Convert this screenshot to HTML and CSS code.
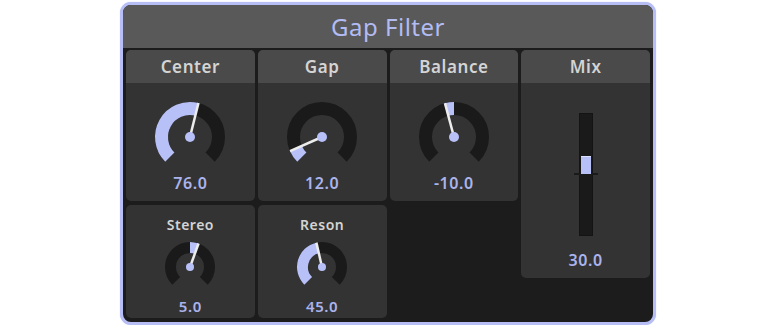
FILE: index.html
```html
<!DOCTYPE html>
<html lang="en">
<head>
    <meta charset="UTF-8">
    <meta name="viewport" content="width=device-width, initial-scale=1.0">
    <title>Gap Filter</title>
    <link rel="stylesheet" href="styles.css">
</head>
<body>

    <div class="plugin">
        <div class="title">Gap Filter</div>

        <div class="controls">
            <!-- Linha de cima -->
            <div class="card card-big">
                <div class="card-head">Center</div>
                <svg class="knob" width="76" height="72" viewBox="0 0 76 72">
                    <path class="track" d="M17.85 58.15 A28.5 28.5 0 1 1 58.15 58.15" stroke-width="13"/>
                    <path class="fill" d="M17.85 58.15 A28.5 28.5 0 0 1 44.89 10.35" stroke-width="13"/>
                    <line class="pointer" x1="38" y1="38" x2="46.47" y2="4.04"/>
                    <circle class="dot" cx="38" cy="38" r="5"/>
                </svg>
                <div class="value">76.0</div>
            </div>

            <div class="card card-big">
                <div class="card-head">Gap</div>
                <svg class="knob" width="76" height="72" viewBox="0 0 76 72">
                    <path class="track" d="M17.85 58.15 A28.5 28.5 0 1 1 58.15 58.15" stroke-width="13"/>
                    <path class="fill" d="M17.85 58.15 A28.5 28.5 0 0 1 11.97 49.59" stroke-width="13"/>
                    <line class="pointer" x1="38" y1="38" x2="6.03" y2="52.23"/>
                    <circle class="dot" cx="38" cy="38" r="5"/>
                </svg>
                <div class="value">12.0</div>
            </div>

            <div class="card card-big">
                <div class="card-head">Balance</div>
                <svg class="knob" width="76" height="72" viewBox="0 0 76 72">
                    <path class="track" d="M17.85 58.15 A28.5 28.5 0 1 1 58.15 58.15" stroke-width="13"/>
                    <path class="fill" d="M30.62 10.47 A28.5 28.5 0 0 1 38 9.5" stroke-width="13"/>
                    <line class="pointer" x1="38" y1="38" x2="28.94" y2="4.19"/>
                    <circle class="dot" cx="38" cy="38" r="5"/>
                </svg>
                <div class="value">-10.0</div>
            </div>

            <div class="card card-mix">
                <div class="card-head">Mix</div>
                <div class="fader">
                    <div class="fader-mark"></div>
                    <div class="fader-thumb"></div>
                </div>
                <div class="value">30.0</div>
            </div>

            <!-- Linha de baixo -->
            <div class="card card-small">
                <div class="label">Stereo</div>
                <svg class="knob" width="54" height="50" viewBox="0 0 54 50">
                    <path class="track" d="M13.21 40.79 A19.5 19.5 0 1 1 40.79 40.79" stroke-width="11"/>
                    <path class="fill" d="M27 7.5 A19.5 19.5 0 0 1 33.67 8.68" stroke-width="11"/>
                    <line class="pointer" x1="27" y1="27" x2="35.55" y2="3.51"/>
                    <circle class="dot" cx="27" cy="27" r="4"/>
                </svg>
                <div class="value">5.0</div>
            </div>

            <div class="card card-small">
                <div class="label">Reson</div>
                <svg class="knob" width="54" height="50" viewBox="0 0 54 50">
                    <path class="track" d="M13.21 40.79 A19.5 19.5 0 1 1 40.79 40.79" stroke-width="11"/>
                    <path class="fill" d="M13.21 40.79 A19.5 19.5 0 0 1 22.61 8.0" stroke-width="11"/>
                    <line class="pointer" x1="27" y1="27" x2="21.38" y2="2.64"/>
                    <circle class="dot" cx="27" cy="27" r="4"/>
                </svg>
                <div class="value">45.0</div>
            </div>
        </div>
    </div>

</body>
</html>
```

FILE: styles.css
```css
body {
    font-family: "Noto Sans", "Open Sans", sans-serif;
    margin: 0;
    padding: 2px 0 0;
    background-color: #ffffff;
}

.plugin {
    box-sizing: border-box;
    width: 536px;
    height: 323px;
    margin: 0 auto;
    border: 3px solid #b6bef5;
    border-radius: 11px;
    background-color: #1c1c1c;
    box-shadow: 0 0 1px #b6bef5;
    overflow: hidden;
}

.title {
    height: 43px;
    display: flex;
    align-items: center;
    justify-content: center;
    background-color: #595959;
    color: #b3bbf3;
    font-size: 24px;
    letter-spacing: 0.5px;
}

.controls {
    display: grid;
    grid-template-columns: repeat(4, 1fr);
    column-gap: 3px;
    row-gap: 4px;
    padding: 2px 3px 4px;
    align-items: start;
}

.card {
    display: flex;
    flex-direction: column;
    align-items: center;
    background-color: #333333;
    border-radius: 5px;
}

.card-head {
    align-self: stretch;
    height: 33px;
    display: flex;
    align-items: center;
    justify-content: center;
    background-color: #4a4a4a;
    border-radius: 5px 5px 0 0;
    color: #d4d4d4;
    font-size: 17px;
    font-weight: 600;
    letter-spacing: 0.6px;
}

.value {
    height: 20px;
    line-height: 20px;
    color: #abb3ec;
    font-size: 16px;
    font-weight: 600;
    letter-spacing: 0.6px;
}

/* Cartões grandes */
.card-big {
    padding-bottom: 8px;
}

.card-big .knob {
    margin-top: 16px;
}

.card-big .value {
    margin-top: 2px;
}

/* Cartões pequenos */
.card-small {
    padding: 11px 0 2px;
}

.card-small .label {
    height: 18px;
    line-height: 18px;
    color: #d4d4d4;
    font-size: 14px;
    font-weight: 600;
    letter-spacing: 0.5px;
}

.card-small .knob {
    margin-top: 6px;
}

.card-small .value {
    margin-top: 6px;
    font-size: 15px;
}

.knob {
    display: block;
}

.knob .track {
    fill: none;
    stroke: #1a1a1a;
}

.knob .fill {
    fill: none;
    stroke: #b8c0f8;
}

.knob .pointer {
    stroke: #ececec;
    stroke-width: 2.5;
}

.knob .dot {
    fill: #b8c0f8;
}

/* Fader do Mix */
.card-mix {
    grid-column: 4;
    grid-row: 1 / span 2;
    padding-bottom: 8px;
}

.fader {
    position: relative;
    width: 14px;
    height: 123px;
    margin-top: 30px;
    background-color: #1a1a1a;
    box-shadow: inset 0 0 0 1px #141414;
}

.fader-mark {
    position: absolute;
    top: 60px;
    left: -5px;
    width: 24px;
    height: 2px;
    background-color: #1a1a1a;
}

.fader-thumb {
    position: absolute;
    top: 43px;
    left: 2px;
    box-sizing: border-box;
    width: 10px;
    height: 18px;
    background-color: #b8c0f8;
    border-top: 1px solid #dde1ff;
}

.card-mix .value {
    margin-top: 14px;
}
```
